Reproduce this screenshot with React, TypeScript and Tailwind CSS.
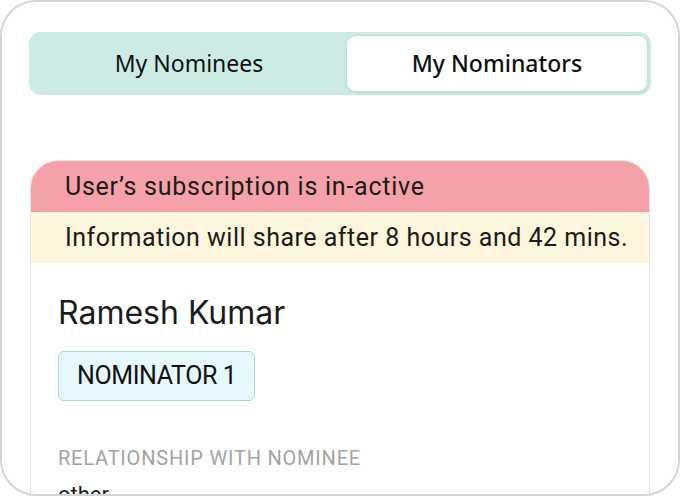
import React from "react";

export default function App() {
  return (
    <div className="w-[680px] h-[496px] bg-white">
      <div className="w-[680px] h-[496px] rounded-[36px] border-2 border-[#d4d4d4] bg-white overflow-hidden pt-[30px] px-[27px]">
        <div className="h-[63px] rounded-[12px] bg-[#cdebe5] p-[3px] flex font-['Noto_Sans',sans-serif] text-[23px] text-[#111]">
          <button className="flex-1 flex items-center justify-center">My Nominees</button>
          <button className="w-[302px] flex items-center justify-center rounded-[10px] bg-white border border-[#bfe0d9] shadow-[0_1px_2px_rgba(0,0,0,0.08)] font-medium">
            My Nominators
          </button>
        </div>

        <div className="mt-[65px] mx-[1px] rounded-t-[28px] border-[1.5px] border-[#e4e4e4] overflow-hidden font-['Roboto',sans-serif]">
          <div className="h-[51px] bg-[#f5a1a9] flex items-center pl-[34px] whitespace-nowrap text-[25px] tracking-[0.75px] text-[#1b1b1b]">
            User’s subscription is in-active
          </div>
          <div className="h-[51px] bg-[#fdf6dc] flex items-center pl-[34px] whitespace-nowrap text-[25px] tracking-[0.5px] text-[#1b1b1b]">
            Information will share after 8 hours and 42 mins.
          </div>
          <div className="px-[27px] pt-[29px] pb-[40px]">
            <div className="font-['Inter',sans-serif] text-[32px] leading-[42px] text-[#1c1c1c]">Ramesh Kumar</div>
            <div className="mt-[17px] inline-flex items-center h-[50px] px-[18px] rounded-[6px] bg-[#e6f7fd] border-[1.5px] border-[#9fd6e6] text-[25px] text-[#111] tracking-[-0.4px]">
              NOMINATOR 1
            </div>
            <div className="mt-[45px] text-[20px] leading-[24px] tracking-[0.8px] text-[#a3a3a3] uppercase">
              Relationship with nominee
            </div>
            <div className="mt-[8px] text-[22px] text-[#1c1c1c]">other</div>
          </div>
        </div>
      </div>
    </div>
  );
}
